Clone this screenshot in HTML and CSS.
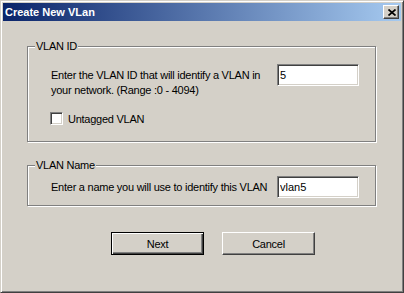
FILE: index.html
```html
<!DOCTYPE html>
<html lang="en">
<head>
  <meta charset="UTF-8">
  <meta name="viewport" content="width=device-width, initial-scale=1.0">
  <title>Create New VLan</title>
  <link rel="stylesheet" href="styles.css">
</head>
<body>
  <div class="window">
    <div class="titlebar">
      <span class="title">Create New VLan</span>
      <span class="close-btn">
        <svg width="8" height="7" viewBox="0 0 8 7">
          <path d="M0.5 0.5 L7.5 6.5 M7.5 0.5 L0.5 6.5" stroke="#000" stroke-width="1.7" fill="none"/>
        </svg>
      </span>
    </div>
    <div class="content">
      <div class="group group-id">
        <span class="group-title">VLAN ID</span>
        <div class="row row-id">
          <p class="hint">Enter the VLAN ID that will identify a VLAN in<br>your network. (Range :0 - 4094)</p>
          <input class="field" type="text" value="5">
        </div>
        <label class="check-row"><span class="checkbox"></span>Untagged VLAN</label>
      </div>
      <div class="group group-name">
        <span class="group-title">VLAN Name</span>
        <div class="row row-name">
          <p class="hint">Enter a name you will use to identify this VLAN</p>
          <input class="field" type="text" value="vlan5">
        </div>
      </div>
      <div class="buttons">
        <button class="btn btn-default">Next</button>
        <button class="btn">Cancel</button>
      </div>
    </div>
  </div>
</body>
</html>
```

FILE: styles.css
```css
*{margin:0px;padding:0px;box-sizing:border-box;}

body {
  font-family: "Liberation Sans", Arial, sans-serif;
  font-size: 11px;
  letter-spacing: -0.25px;
  color: #000;
  background: #d4d0c8;
}

/* window frame */
.window {
  width: 404px;
  height: 293px;
  background: #d4d0c8;
  border: 1px solid;
  border-color: #d4d0c8 #404040 #404040 #d4d0c8;
  box-shadow: inset 1px 1px 0 #fff, inset -1px -1px 0 #808080;
  padding: 2px;
}
.titlebar {
  height: 18px;
  display: flex;
  align-items: center;
  justify-content: space-between;
  padding: 0 2px 0 2px;
  background: linear-gradient(to right, #0a246a, #a6caf0);
}
.title {
  color: #fff;
  font-weight: bold;
  font-size: 11px;
  letter-spacing: 0;
}
.close-btn {
  width: 16px;
  height: 14px;
  display: flex;
  align-items: center;
  justify-content: center;
  padding-left: 1px;
  background: #d4d0c8;
  border: 1px solid;
  border-color: #fff #404040 #404040 #fff;
  box-shadow: inset -1px -1px 0 #808080;
}
.close-btn svg {display: block;}

.content {
  padding: 25px 25px 0 24px;
}

/* group boxes */
.group {
  position: relative;
  border: 1px solid #808080;
  box-shadow: 1px 1px 0 #fff, inset 1px 1px 0 #fff;
  padding: 0 16px 0 23px;
}
.group-title {
  position: absolute;
  top: -7px;
  left: 7px;
  line-height: 13px;
  padding: 0 1px;
  background: #d4d0c8;
}
.group-id {
  padding-top: 17px;
  padding-bottom: 16px;
}
.group-name {
  margin-top: 23px;
  padding-top: 10px;
  padding-bottom: 7px;
}
.row {
  display: flex;
  justify-content: space-between;
}
.row-id {align-items: flex-start;}
.row-name {align-items: center;}
.hint {
  line-height: 15px;
  white-space: nowrap;
}
.row-id .hint {padding-top: 4px;}

.field {
  width: 82px;
  height: 22px;
  flex-shrink: 0;
  font-family: "Liberation Sans", Arial, sans-serif;
  font-size: 11px;
  padding: 0 2px;
  background: #fff;
  border: 1px solid;
  border-color: #808080 #fff #fff #808080;
  box-shadow: inset 1px 1px 0 #404040, inset -1px -1px 0 #d4d0c8;
  outline: none;
}

.check-row {
  display: flex;
  align-items: center;
  gap: 5px;
  margin-top: 14px;
  margin-left: -1px;
  height: 13px;
}
.checkbox {
  width: 13px;
  height: 13px;
  background: #fff;
  border: 1px solid;
  border-color: #808080 #fff #fff #808080;
  box-shadow: inset 1px 1px 0 #404040, inset -1px -1px 0 #d4d0c8;
}

/* buttons */
.buttons {
  display: flex;
  gap: 18px;
  margin-top: 26px;
  padding-left: 84px;
}
.btn {
  width: 93px;
  height: 23px;
  font-family: "Liberation Sans", Arial, sans-serif;
  font-size: 11px;
  letter-spacing: -0.25px;
  color: #000;
  background: #d4d0c8;
  border: 1px solid;
  border-color: #fff #404040 #404040 #fff;
  box-shadow: inset -1px -1px 0 #808080;
}
.btn-default {
  border-color: #000;
  box-shadow: inset 1px 1px 0 #fff, inset -1px -1px 0 #404040, inset -2px -2px 0 #808080;
}
```
